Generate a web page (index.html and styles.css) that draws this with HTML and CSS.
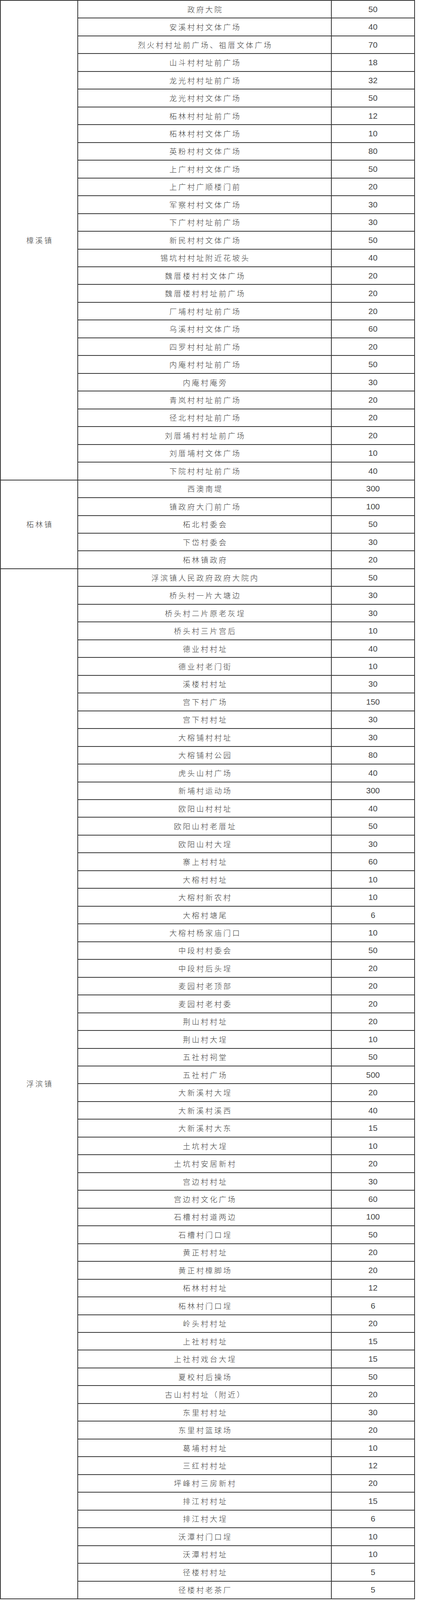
FILE: index.html
```html
<!DOCTYPE html>
<html lang="zh-CN">
<head>
<meta charset="utf-8">
<title>场所表</title>
<link rel="stylesheet" href="styles.css">
</head>
<body>
<div class="sheet" role="table">
<div class="cell town span27">樟溪镇</div>
<div class="cell place">政府大院</div><div class="cell num">50</div>
<div class="cell place">安溪村村文体广场</div><div class="cell num">40</div>
<div class="cell place">烈火村村址前广场、祖厝文体广场</div><div class="cell num">70</div>
<div class="cell place">山斗村村址前广场</div><div class="cell num">18</div>
<div class="cell place">龙光村村址前广场</div><div class="cell num">32</div>
<div class="cell place">龙光村村文体广场</div><div class="cell num">50</div>
<div class="cell place">柘林村村址前广场</div><div class="cell num">12</div>
<div class="cell place">柘林村村文体广场</div><div class="cell num">10</div>
<div class="cell place">英粉村村文体广场</div><div class="cell num">80</div>
<div class="cell place">上广村村文体广场</div><div class="cell num">50</div>
<div class="cell place">上广村广顺楼门前</div><div class="cell num">20</div>
<div class="cell place">军察村村文体广场</div><div class="cell num">30</div>
<div class="cell place">下广村村址前广场</div><div class="cell num">30</div>
<div class="cell place">新民村村文体广场</div><div class="cell num">50</div>
<div class="cell place">锡坑村村址附近花坡头</div><div class="cell num">40</div>
<div class="cell place">魏厝楼村村文体广场</div><div class="cell num">20</div>
<div class="cell place">魏厝楼村村址前广场</div><div class="cell num">20</div>
<div class="cell place">厂埔村村址前广场</div><div class="cell num">20</div>
<div class="cell place">乌溪村村文体广场</div><div class="cell num">60</div>
<div class="cell place">四罗村村址前广场</div><div class="cell num">20</div>
<div class="cell place">内庵村村址前广场</div><div class="cell num">50</div>
<div class="cell place">内庵村庵旁</div><div class="cell num">30</div>
<div class="cell place">青岚村村址前广场</div><div class="cell num">20</div>
<div class="cell place">径北村村址前广场</div><div class="cell num">20</div>
<div class="cell place">刘厝埔村村址前广场</div><div class="cell num">20</div>
<div class="cell place">刘厝埔村文体广场</div><div class="cell num">10</div>
<div class="cell place">下院村村址前广场</div><div class="cell num">40</div>
<div class="cell town span5">柘林镇</div>
<div class="cell place">西澳南堤</div><div class="cell num">300</div>
<div class="cell place">镇政府大门前广场</div><div class="cell num">100</div>
<div class="cell place">柘北村委会</div><div class="cell num">50</div>
<div class="cell place">下岱村委会</div><div class="cell num">30</div>
<div class="cell place">柘林镇政府</div><div class="cell num">20</div>
<div class="cell town span58">浮滨镇</div>
<div class="cell place">浮滨镇人民政府政府大院内</div><div class="cell num">50</div>
<div class="cell place">桥头村一片大塘边</div><div class="cell num">30</div>
<div class="cell place">桥头村二片原老灰埕</div><div class="cell num">30</div>
<div class="cell place">桥头村三片宫后</div><div class="cell num">10</div>
<div class="cell place">德业村村址</div><div class="cell num">40</div>
<div class="cell place">德业村老门街</div><div class="cell num">10</div>
<div class="cell place">溪楼村村址</div><div class="cell num">30</div>
<div class="cell place">宫下村广场</div><div class="cell num">150</div>
<div class="cell place">宫下村村址</div><div class="cell num">30</div>
<div class="cell place">大榕铺村村址</div><div class="cell num">30</div>
<div class="cell place">大榕铺村公园</div><div class="cell num">80</div>
<div class="cell place">虎头山村广场</div><div class="cell num">40</div>
<div class="cell place">新埔村运动场</div><div class="cell num">300</div>
<div class="cell place">欧阳山村村址</div><div class="cell num">40</div>
<div class="cell place">欧阳山村老厝址</div><div class="cell num">50</div>
<div class="cell place">欧阳山村大埕</div><div class="cell num">30</div>
<div class="cell place">寨上村村址</div><div class="cell num">60</div>
<div class="cell place">大榕村村址</div><div class="cell num">10</div>
<div class="cell place">大榕村新农村</div><div class="cell num">10</div>
<div class="cell place">大榕村塘尾</div><div class="cell num">6</div>
<div class="cell place">大榕村杨家庙门口</div><div class="cell num">10</div>
<div class="cell place">中段村村委会</div><div class="cell num">50</div>
<div class="cell place">中段村后头埕</div><div class="cell num">20</div>
<div class="cell place">麦园村老顶部</div><div class="cell num">20</div>
<div class="cell place">麦园村老村委</div><div class="cell num">20</div>
<div class="cell place">荆山村村址</div><div class="cell num">20</div>
<div class="cell place">荆山村大埕</div><div class="cell num">10</div>
<div class="cell place">五社村祠堂</div><div class="cell num">50</div>
<div class="cell place">五社村广场</div><div class="cell num">500</div>
<div class="cell place">大新溪村大埕</div><div class="cell num">20</div>
<div class="cell place">大新溪村溪西</div><div class="cell num">40</div>
<div class="cell place">大新溪村大东</div><div class="cell num">15</div>
<div class="cell place">土坑村大埕</div><div class="cell num">10</div>
<div class="cell place">土坑村安居新村</div><div class="cell num">20</div>
<div class="cell place">宫边村村址</div><div class="cell num">30</div>
<div class="cell place">宫边村文化广场</div><div class="cell num">60</div>
<div class="cell place">石槽村村道两边</div><div class="cell num">100</div>
<div class="cell place">石槽村门口埕</div><div class="cell num">50</div>
<div class="cell place">黄正村村址</div><div class="cell num">20</div>
<div class="cell place">黄正村樟脚场</div><div class="cell num">20</div>
<div class="cell place">柘林村村址</div><div class="cell num">12</div>
<div class="cell place">柘林村门口埕</div><div class="cell num">6</div>
<div class="cell place">岭头村村址</div><div class="cell num">20</div>
<div class="cell place">上社村村址</div><div class="cell num">15</div>
<div class="cell place">上社村戏台大埕</div><div class="cell num">15</div>
<div class="cell place">夏校村后操场</div><div class="cell num">50</div>
<div class="cell place">古山村村址（附近）</div><div class="cell num">20</div>
<div class="cell place">东里村村址</div><div class="cell num">30</div>
<div class="cell place">东里村篮球场</div><div class="cell num">20</div>
<div class="cell place">葛埔村村址</div><div class="cell num">10</div>
<div class="cell place">三红村村址</div><div class="cell num">12</div>
<div class="cell place">坪峰村三房新村</div><div class="cell num">20</div>
<div class="cell place">排江村村址</div><div class="cell num">15</div>
<div class="cell place">排江村大埕</div><div class="cell num">6</div>
<div class="cell place">沃潭村门口埕</div><div class="cell num">10</div>
<div class="cell place">沃潭村村址</div><div class="cell num">10</div>
<div class="cell place">径楼村村址</div><div class="cell num">5</div>
<div class="cell place">径楼村老茶厂</div><div class="cell num">5</div>
</div>
</body>
</html>
```

FILE: styles.css
```css
html, body {
  margin: 0;
  padding: 0;
  background: #ffffff;
}

.sheet {
  display: grid;
  grid-template-columns: 198px 649px 213px;
  grid-template-rows: repeat(90, 1fr);
  width: 1062px;
  height: calc(100vh - 2px);
  box-sizing: border-box;
  border-top: 2px solid #333333;
  border-left: 2px solid #333333;
}

.cell {
  box-sizing: border-box;
  display: flex;
  align-items: center;
  justify-content: center;
  min-height: 0;
  border-right: 2px solid #333333;
  border-bottom: 2px solid #333333;
  line-height: 22px;
  white-space: nowrap;
  overflow: hidden;
}

.town,
.place {
  font-family: "Noto Sans CJK SC", "Noto Sans", sans-serif;
  font-size: 19px;
  font-weight: 300;
  letter-spacing: 4px;
  padding-left: 4px;
  color: #3c3c3c;
}

.town { grid-column: 1; }
.place { grid-column: 2; }
.num {
  grid-column: 3;
  font-family: "Liberation Sans", Arial, sans-serif;
  font-size: 21px;
  color: #444444;
}

.span27 { grid-row: span 27; }
.span5 { grid-row: span 5; }
.span58 { grid-row: span 58; }
```
